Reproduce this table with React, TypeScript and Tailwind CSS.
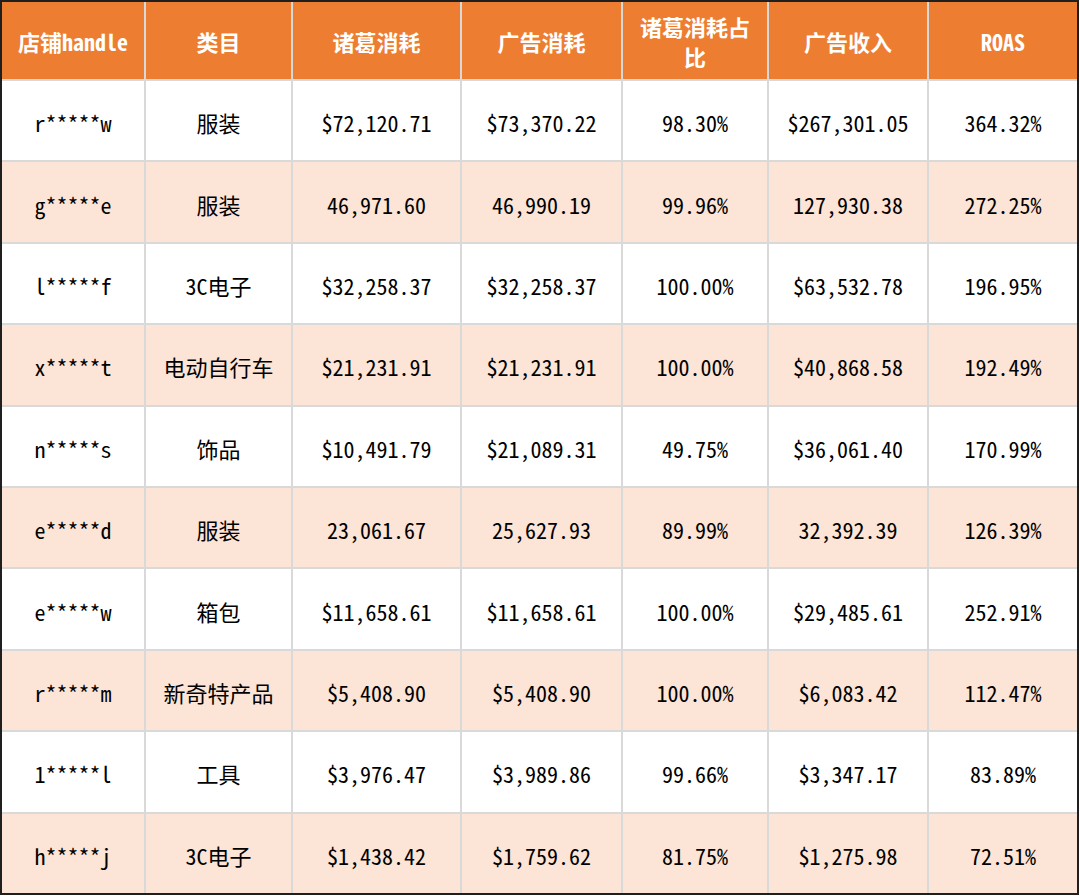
import React from "react";

const headers: React.ReactNode[] = [
  "店铺handle",
  "类目",
  "诸葛消耗",
  "广告消耗",
  <>
    诸葛消耗占
    <br />
    比
  </>,
  "广告收入",
  "ROAS",
];

const rows: string[][] = [
  ["r*****w", "服装", "$72,120.71", "$73,370.22", "98.30%", "$267,301.05", "364.32%"],
  ["g*****e", "服装", "46,971.60", "46,990.19", "99.96%", "127,930.38", "272.25%"],
  ["l*****f", "3C电子", "$32,258.37", "$32,258.37", "100.00%", "$63,532.78", "196.95%"],
  ["x*****t", "电动自行车", "$21,231.91", "$21,231.91", "100.00%", "$40,868.58", "192.49%"],
  ["n*****s", "饰品", "$10,491.79", "$21,089.31", "49.75%", "$36,061.40", "170.99%"],
  ["e*****d", "服装", "23,061.67", "25,627.93", "89.99%", "32,392.39", "126.39%"],
  ["e*****w", "箱包", "$11,658.61", "$11,658.61", "100.00%", "$29,485.61", "252.91%"],
  ["r*****m", "新奇特产品", "$5,408.90", "$5,408.90", "100.00%", "$6,083.42", "112.47%"],
  ["1*****l", "工具", "$3,976.47", "$3,989.86", "99.66%", "$3,347.17", "83.89%"],
  ["h*****j", "3C电子", "$1,438.42", "$1,759.62", "81.75%", "$1,275.98", "72.51%"],
];

export default function App() {
  return (
    <div className="w-[1080px] h-[896px] bg-white">
      <div className="w-[1079px] h-[895px] border-2 border-[#1f1f1f] bg-[#d9d9d9]">
        <div
          className="grid h-[891px] gap-[2px] grid-cols-[142px_145px_167px_159px_144px_158px_148px] grid-rows-[77px_repeat(10,1fr)] text-[22px] text-black [font-family:'Noto_Sans_CJK_SC',sans-serif] [font-feature-settings:'hwid']"
        >
          {headers.map((h, i) => (
            <div
              key={"h" + i}
              className="bg-[#ED7D31] text-white font-bold flex items-center justify-center text-center leading-[30px]"
            >
              <span>{h}</span>
            </div>
          ))}
          {rows.map((r, ri) =>
            r.map((c, ci) => (
              <div
                key={ri + "-" + ci}
                className={
                  (ri % 2 === 1 ? "bg-[#FCE4D6]" : "bg-white") +
                  " flex items-center justify-center text-center pt-[4px]"
                }
              >
                {c}
              </div>
            ))
          )}
        </div>
      </div>
    </div>
  );
}
